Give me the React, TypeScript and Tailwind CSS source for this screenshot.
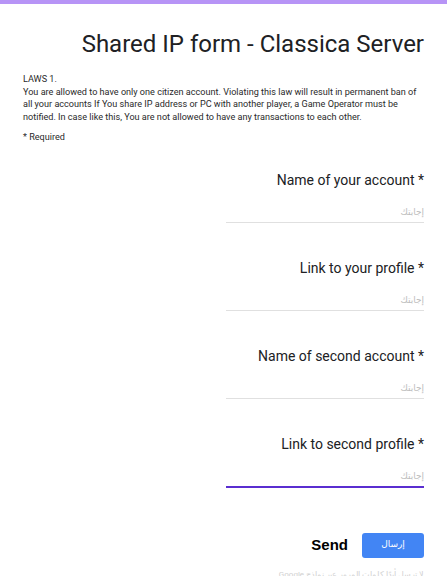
export default function App() {
  const fields = [
    "Name of your account",
    "Link to your profile",
    "Name of second account",
    "Link to second profile",
  ];

  return (
    <div className="h-screen bg-white overflow-hidden" style={{ fontFamily: "Roboto, 'Noto Sans', sans-serif" }}>
      <div className="h-[4px] bg-[#b794f6]" />
      <div className="px-[23px]">
        <h1 className="mt-[24px] text-right text-[24px] leading-[32px] text-[#202124] font-normal">
          Shared IP form - Classica Server
        </h1>

        <div className="mt-[13px] text-[9.1px] leading-[12.5px] text-[#2a2a2a]">
          <p>LAWS 1.</p>
          <p className="whitespace-nowrap">
            You are allowed to have only one citizen account. Violating this law will result in permanent ban of
            <br />
            all your accounts If You share IP address or PC with another player, a Game Operator must be
            <br />
            notified. In case like this, You are not allowed to have any transactions to each other.
          </p>
          <p className="mt-[8px]">* Required</p>
        </div>

        <div className="ml-auto mt-[27px] w-[198px] flex flex-col gap-[36px]">
          {fields.map((label, i) => (
            <div key={label} className="flex flex-col items-end">
              <div className="text-[14px] leading-[18px] text-[#202124]">{label} *</div>
              <div
                className={
                  "mt-[17px] w-full text-right pb-[4px] text-[9px] leading-[12px] " +
                  (i === 3 ? "border-b-2 border-[#5a2ed0]" : "border-b border-[#e0e0e0]")
                }
              >
                <span className="text-[#bdbdbd]" dir="rtl" style={{ fontFamily: "'DejaVu Sans', sans-serif" }}>
                  إجابتك
                </span>
              </div>
            </div>
          ))}
        </div>

        <div className="mt-[45px] flex items-center justify-end gap-[14px]">
          <span className="text-[15px] font-bold text-black" style={{ fontFamily: "'Liberation Sans', Arial, sans-serif" }}>
            Send
          </span>
          <button className="w-[62px] h-[25px] rounded-[3px] bg-[#4285f4] text-white text-[9px] flex items-center justify-center" style={{ fontFamily: "'DejaVu Sans', sans-serif" }}>
            إرسال
          </button>
        </div>

        <div className="mt-[12px] text-right text-[8px] leading-[10px] text-[#d0d0d0]" dir="rtl">
          لا ترسل أبدًا كلمات المرور عبر نماذج Google.
        </div>
      </div>
    </div>
  );
}
